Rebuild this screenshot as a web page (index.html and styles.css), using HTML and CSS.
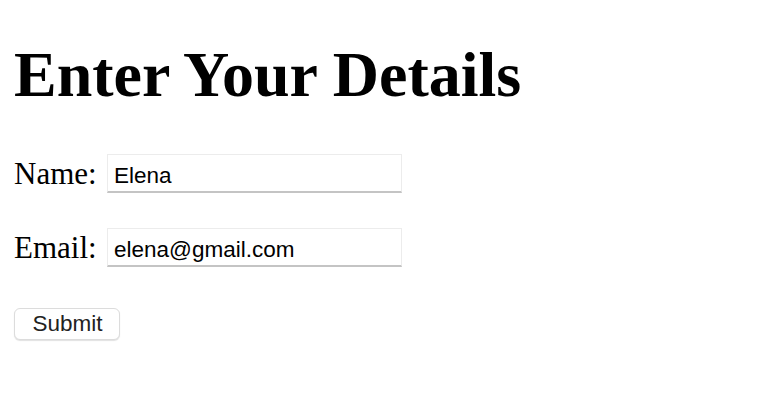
FILE: index.html
```html
<!DOCTYPE html>
<html>
<head>
<meta charset="utf-8">
<title>Enter Your Details</title>
<link rel="stylesheet" href="styles.css">
</head>
<body>
<h1 class="title">Enter Your Details</h1>
<form class="form">
  <div class="row">
    <label class="label" for="name">Name:</label>
    <input class="field" id="name" type="text" value="Elena">
  </div>
  <div class="row">
    <label class="label" for="email">Email:</label>
    <input class="field" id="email" type="email" value="elena@gmail.com">
  </div>
  <button class="submit" type="button">Submit</button>
</form>
</body>
</html>
```
FILE: styles.css
```css
html, body {
  margin: 0;
  background: #ffffff;
}
body {
  padding: 14px;
  font-family: "Liberation Serif", "Times New Roman", serif;
  color: #000;
}
.title {
  margin: 29px 0 0 0;
  font-size: 64px;
  line-height: 63px;
  font-weight: bold;
}
.form {
  display: flex;
  flex-direction: column;
  align-items: flex-start;
  margin-top: 48px;
}
.row {
  display: flex;
  align-items: center;
  height: 39px;
  margin-bottom: 35px;
}
.label {
  font-size: 31px;
  line-height: 39px;
  width: 93px;
}
.field {
  box-sizing: border-box;
  width: 295px;
  height: 39px;
  margin: 0;
  padding: 5px 5px 0 6px;
  border: 1px solid #ececec;
  border-bottom: 2px solid #c4c4c4;
  border-radius: 0;
  outline: none;
  background: #fff;
  font-family: "Liberation Sans", Arial, sans-serif;
  font-size: 22.5px;
  color: #000;
}
.submit {
  box-sizing: border-box;
  margin-top: 6px;
  width: 106px;
  height: 32px;
  padding: 0 0 0 1px;
  border: 1px solid #dcdcdc;
  border-radius: 6px;
  background: #fff;
  box-shadow: 0 1px 1px rgba(0,0,0,0.12);
  font-family: "Liberation Sans", Arial, sans-serif;
  font-size: 22.5px;
  color: #222;
}
```
